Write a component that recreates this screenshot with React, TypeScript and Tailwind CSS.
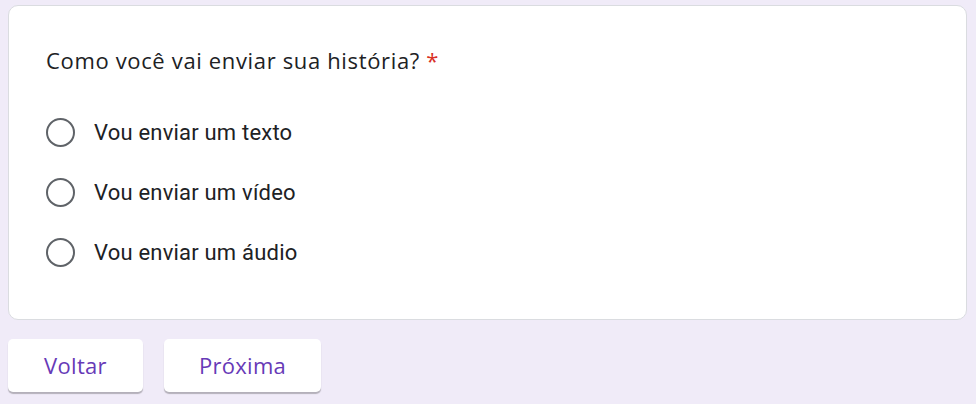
import React, { useState } from 'react';

const OPTIONS = ['Vou enviar um texto', 'Vou enviar um vídeo', 'Vou enviar um áudio'];

const Radio: React.FC<{ checked: boolean }> = ({ checked }) => (
  <span className="w-[29px] h-[29px] rounded-full border-[2.5px] border-[#5f6368] flex items-center justify-center shrink-0">
    {checked && <span className="w-[14px] h-[14px] rounded-full bg-[#673ab7]" />}
  </span>
);

export default function App() {
  const [value, setValue] = useState<string | null>(null);

  return (
    <div className="w-[976px] h-[404px] bg-[#f0ebf8] pt-[5px] pl-[8px] pr-[9px] font-['Roboto',sans-serif] text-[#202124]">
      <div className="bg-white border-[1.5px] border-[#dadce0] rounded-[10px] h-[315px] pl-[37px] pt-[36px]">
        <div className="text-[22px] leading-[36px] font-['Open_Sans',sans-serif] tracking-[0.65px]">
          Como você vai enviar sua história? <span className="text-[#d93025]">*</span>
        </div>
        <div className="flex flex-col gap-[31px] mt-[40px]">
          {OPTIONS.map(opt => (
            <label key={opt} className="flex items-center gap-[19px] cursor-pointer" onClick={() => setValue(opt)}>
              <Radio checked={value === opt} />
              <span className="text-[22px] leading-[29px] tracking-[0.2px]">{opt}</span>
            </label>
          ))}
        </div>
      </div>
      <div className="flex gap-[21px] mt-[19px]">
        <button className="h-[53px] w-[135px] bg-white rounded-[5px] shadow-[0_2px_1px_rgba(0,0,0,0.25)] text-[#673ab7] text-[22px] font-medium font-['Open_Sans',sans-serif] tracking-[0.3px]">
          Voltar
        </button>
        <button className="h-[53px] w-[157px] bg-white rounded-[5px] shadow-[0_2px_1px_rgba(0,0,0,0.25)] text-[#673ab7] text-[22px] font-medium font-['Open_Sans',sans-serif] tracking-[0.3px]">
          Próxima
        </button>
      </div>
    </div>
  );
}
